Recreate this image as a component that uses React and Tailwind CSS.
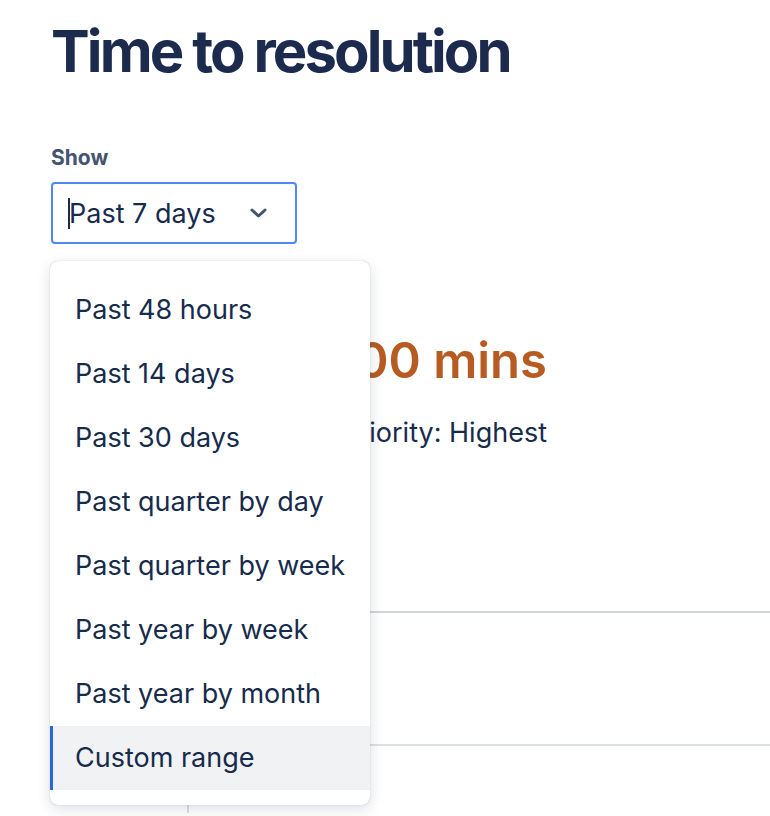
import { useState } from 'react'

const options = [
  'Past 48 hours',
  'Past 14 days',
  'Past 30 days',
  'Past quarter by day',
  'Past quarter by week',
  'Past year by week',
  'Past year by month',
  'Custom range',
]

function Chevron() {
  return (
    <svg width="17" height="10" viewBox="0 0 17 10" fill="none" aria-hidden="true">
      <path d="M2 2l6.5 6 6.5-6" stroke="#44546f" strokeWidth="3" strokeLinecap="round" strokeLinejoin="round" />
    </svg>
  )
}

export default function App() {
  const [selected, setSelected] = useState('Custom range')

  return (
    <div className="h-[816px] bg-white overflow-hidden pl-[51px] pt-[16px] text-[#172b4d]" style={{ fontFamily: 'Inter, "Liberation Sans", sans-serif' }}>
      <h1 className="text-[58px] font-bold leading-[70px] tracking-[-2.9px] text-[#1c2b4d]">Time to resolution</h1>

      <div className="mt-[59px] text-[21px] font-bold leading-[26px] text-[#44546f]">Show</div>

      {/* select + open menu */}
      <div className="relative mt-[11px] w-[246px]">
        <div className="flex h-[62px] items-center justify-between rounded-[4px] border-2 border-[#4f88f2] pl-[16px] pr-[28px]">
          <div className="relative flex items-center pt-[1px]">
            <span className="absolute left-[-1px] top-0 h-[31px] w-[2px] bg-[#172b4d]" />
            <span className="text-[27px] leading-[30px]">Past 7 days</span>
          </div>
          <Chevron />
        </div>

        <ul className="absolute left-[-1px] top-[79px] z-10 w-[320px] rounded-[8px] bg-white pt-[17px] pb-[15px] shadow-[0_4px_14px_rgba(9,30,66,0.14),0_0_1px_rgba(9,30,66,0.35)]">
          {options.map((opt) => (
            <li
              key={opt}
              onClick={() => setSelected(opt)}
              className={
                opt === selected
                  ? 'flex h-[64px] items-center border-l-[3px] border-[#2d66dc] bg-[#f1f2f4] pl-[22px] text-[27px]'
                  : 'flex h-[64px] items-center border-l-[3px] border-transparent pl-[22px] text-[27px]'
              }
            >
              {opt}
            </li>
          ))}
        </ul>
      </div>

      {/* content underneath the menu */}
      <div className="mt-[88px] flex w-[496px] flex-col items-end">
        <div className="text-[49px] font-semibold leading-[58px] text-[#b65c22]">0.00 mins</div>
        <div className="mt-[27px] text-[27px] leading-[32px]">Priority: Highest</div>
      </div>

      <div className="mt-[162px]">
        <div className="flex h-[133px] border-t-2 border-[#d0d4db]">
          <div className="w-[138px] border-r-2 border-[#dcdfe4]" />
          <div className="flex-1" />
        </div>
        <div className="flex h-[69px] border-t-2 border-[#dcdfe4]">
          <div className="w-[138px] border-r-2 border-[#dcdfe4]" />
          <div className="flex-1" />
        </div>
      </div>
    </div>
  )
}
